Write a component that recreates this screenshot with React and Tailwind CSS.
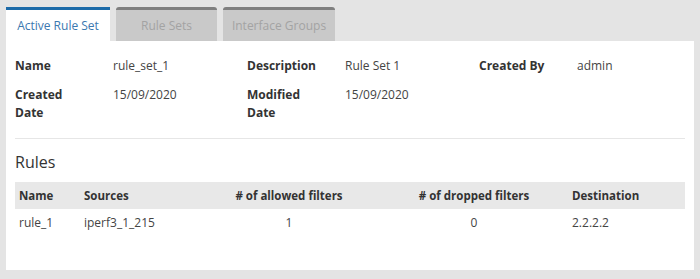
import React from 'react'

const FONT = { fontFamily: '"Open Sans", "Noto Sans", sans-serif' }

const TABS = [
  { label: 'Active Rule Set', width: 'w-[104px]', active: true },
  { label: 'Rule Sets', width: 'w-[101px]' },
  { label: 'Interface Groups', width: 'w-[112px]' },
]

function Tab({label, width, active}){
  if (active) {
    return (
      <div className={`${width} h-[34px] bg-white border-t-[3px] border-[#1c6aa8] flex items-center justify-center text-[12px] text-[#3b78b0]`}>
        {label}
      </div>
    )
  }
  return (
    <div className={`${width} h-[34px] bg-[#c9c9c9] border-t-[3px] border-[#7f7f7f] rounded-t-[3px] flex items-center justify-center text-[12px] text-[#a3a3a3]`}>
      {label}
    </div>
  )
}

function Field({label, value, lines}){
  return (
    <div className="flex w-[232px] shrink-0">
      <div className="w-[98px] shrink-0 font-bold text-[#333]">
        {lines ? lines.map(l => <div key={l}>{l}</div>) : label}
      </div>
      <div className="text-[#444]">{value}</div>
    </div>
  )
}

export default function App(){
  return (
    <div className="w-[700px] h-[279px] bg-[#e4e4e4] pt-[7px] px-[6px] text-[12px] leading-[18px] overflow-hidden" style={FONT}>
      <div className="flex gap-[6px]">
        {TABS.map(t => <Tab key={t.label} {...t} />)}
      </div>
      <div className="bg-white h-[229px] px-[9px] pt-[16px]">
        <div className="flex">
          <Field label="Name" value="rule_set_1" />
          <Field label="Description" value="Rule Set 1" />
          <Field label="Created By" value="admin" />
        </div>
        <div className="flex mt-[11px]">
          <Field lines={['Created', 'Date']} value="15/09/2020" />
          <Field lines={['Modified', 'Date']} value="15/09/2020" />
        </div>
        <div className="mt-[16px] border-t border-[#e6e6e6]" />
        <h2 className="mt-[12px] text-[16px] leading-[22px] text-[#333]">Rules</h2>
        <table className="mt-[9px] w-full table-fixed border-collapse text-[11.5px]">
          <colgroup>
            <col className="w-[65px]" />
            <col className="w-[118px]" />
            <col className="w-[182px]" />
            <col className="w-[188px]" />
            <col />
          </colgroup>
          <thead>
            <tr className="bg-[#e8e8e8] h-[27px] text-[#333]">
              <th className="text-left px-[4px] font-bold">Name</th>
              <th className="text-left px-[4px] font-bold">Sources</th>
              <th className="text-center px-[4px] font-bold"># of allowed filters</th>
              <th className="text-center px-[4px] font-bold"># of dropped filters</th>
              <th className="text-left px-[4px] font-bold">Destination</th>
            </tr>
          </thead>
          <tbody>
            <tr className="h-[27px] text-[#444] text-[12px]">
              <td className="px-[4px]">rule_1</td>
              <td className="px-[4px]">iperf3_1_215</td>
              <td className="px-[4px] text-center">1</td>
              <td className="px-[4px] text-center">0</td>
              <td className="px-[4px]">2.2.2.2</td>
            </tr>
          </tbody>
        </table>
      </div>
    </div>
  )
}
